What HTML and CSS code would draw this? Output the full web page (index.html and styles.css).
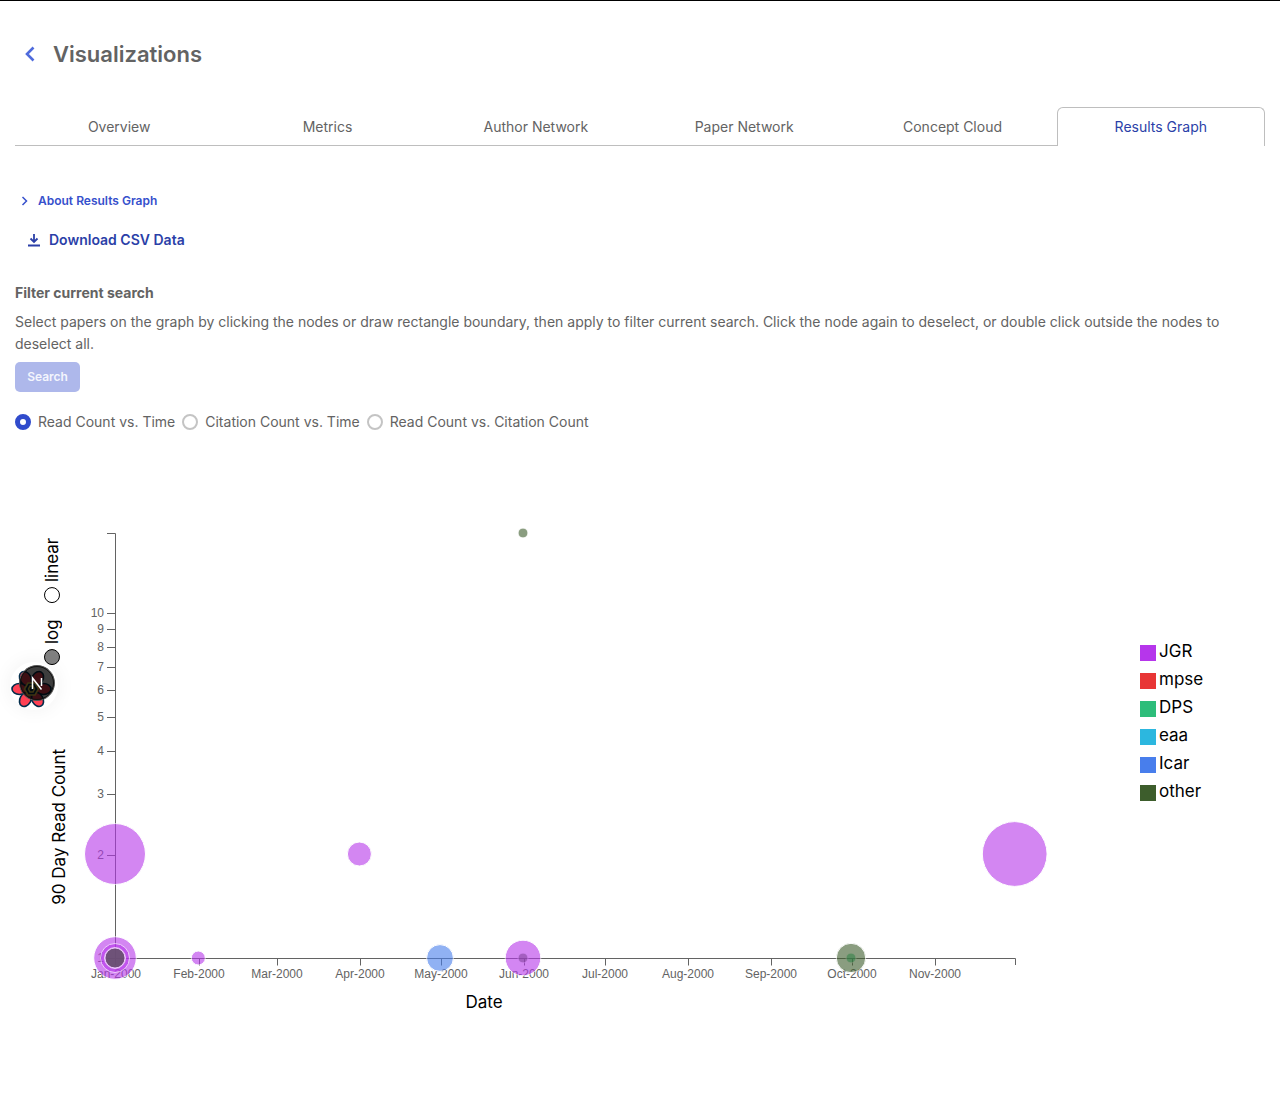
FILE: index.html
```html
<!DOCTYPE html>
<html lang="en">
<head>
<meta charset="utf-8">
<meta name="viewport" content="width=device-width, initial-scale=1">
<title>Visualizations</title>
<link rel="stylesheet" href="styles.css">
</head>
<body>
<main class="page">
  <header class="page-header">
    <a class="back" href="#" aria-label="Back to results">
      <svg width="30" height="30" viewBox="0 0 30 30" aria-hidden="true"><path d="M18.500 8.500 12 15l6.500 6.500" fill="none" stroke="currentColor" stroke-width="2.600"/></svg>
    </a>
    <h1>Visualizations</h1>
  </header>

  <nav class="tabs" aria-label="Visualization types">
    <a class="tab" href="#">Overview</a>
    <a class="tab" href="#">Metrics</a>
    <a class="tab" href="#">Author Network</a>
    <a class="tab" href="#">Paper Network</a>
    <a class="tab" href="#">Concept Cloud</a>
    <a class="tab tab-active" href="#" aria-current="page">Results Graph</a>
  </nav>

  <button class="about" type="button" aria-expanded="false">
    <svg width="20" height="20" viewBox="0 0 20 20" aria-hidden="true"><path d="M7.500 6l4 4-4 4" fill="none" stroke="currentColor" stroke-width="1.500"/></svg>
    About Results Graph
  </button>
  <button class="download" type="button">
    <svg width="14" height="14" viewBox="0 0 14 14" aria-hidden="true"><path d="M7 1v8M3.500 5.500 7 9l3.500-3.500M1 12.500h12" fill="none" stroke="currentColor" stroke-width="1.800"/></svg>
    Download CSV Data
  </button>

  <section class="filter">
    <h2>Filter current search</h2>
    <p>Select papers on the graph by clicking the nodes or draw rectangle boundary, then apply to filter current search. Click the node again to deselect, or double click outside the nodes to deselect all.</p>
    <button class="search" type="button" disabled>Search</button>
  </section>

  <div class="choices" role="radiogroup" aria-label="Graph type">
    <label><input type="radio" name="graph" checked>Read Count vs. Time</label>
    <label><input type="radio" name="graph">Citation Count vs. Time</label>
    <label><input type="radio" name="graph">Read Count vs. Citation Count</label>
  </div>

  <section class="chart" aria-label="Read Count vs. Time">
    <div class="y-side">
      <div class="scale" role="radiogroup" aria-label="Scale">
        <label><input type="radio" name="scale" checked>log</label>
        <label><input type="radio" name="scale">linear</label>
      </div>
      <span class="y-title">90 Day Read Count</span>
    </div>
    <svg class="plot" viewBox="0 0 1065 530" role="img" aria-label="Papers by date and 90 day read count">
      <g transform="translate(40 33)">
        <path class="axis" d="M-8 .5H.5V425.500M-8 80.500H.5M-8 96.500H.5M-8 114.500H.5M-8 134.500H.5M-8 157.500H.5M-8 184.500H.5M-8 218.500H.5M-8 261.500H.5M-8 322.500H.5M-8 425.500H.5"/>
        <path class="axis" d="M.5 432V425.500H900.500V432M84.500 425.500v7M162.500 425.500v7M245.500 425.500v7M326.500 425.500v7M409.500 425.500v7M490.500 425.500v7M573.500 425.500v7M656.500 425.500v7M737.500 425.500v7M820.500 425.500v7"/>
        <g class="y-ticks">
          <text x="-11" y="84">10</text><text x="-11" y="100">9</text><text x="-11" y="118">8</text><text x="-11" y="138">7</text><text x="-11" y="161">6</text><text x="-11" y="188">5</text><text x="-11" y="222">4</text><text x="-11" y="265">3</text><text x="-11" y="326">2</text><text x="-11" y="429">1</text>
        </g>
        <g class="x-ticks">
          <text x="1" y="445">Jan-2000</text><text x="84" y="445">Feb-2000</text><text x="162" y="445">Mar-2000</text><text x="245" y="445">Apr-2000</text><text x="326" y="445">May-2000</text><text x="409" y="445">Jun-2000</text><text x="490" y="445">Jul-2000</text><text x="573" y="445">Aug-2000</text><text x="656" y="445">Sep-2000</text><text x="737" y="445">Oct-2000</text><text x="820" y="445">Nov-2000</text>
        </g>
        <g class="nodes">
          <circle class="jgr" cx="0" cy="321" r="30.500"/>
          <circle class="jgr" cx="0" cy="425" r="21.300"/>
          <circle class="jgr" cx="0" cy="425" r="14.500"/>
          <circle class="jgr" cx="0" cy="425" r="10.500"/>
          <circle class="other" cx="0" cy="425" r="10"/>
          <circle class="jgr" cx="83.300" cy="425" r="7"/>
          <circle class="jgr" cx="244.400" cy="321" r="12"/>
          <circle class="icar" cx="325" cy="425" r="13.400"/>
          <circle class="other" cx="408" cy="425" r="5"/>
          <circle class="jgr" cx="408" cy="425" r="17.800"/>
          <circle class="other" cx="408" cy="0" r="5"/>
          <circle class="dps" cx="736" cy="425" r="5"/>
          <circle class="other" cx="736" cy="425" r="14.700"/>
          <circle class="jgr" cx="899.700" cy="321" r="32.400"/>
        </g>
        <text class="x-title" x="369" y="475">Date</text>
      </g>
    </svg>
    <ul class="legend">
      <li class="jgr">JGR</li>
      <li class="mpse">mpse</li>
      <li class="dps">DPS</li>
      <li class="eaa">eaa</li>
      <li class="icar">Icar</li>
      <li class="other">other</li>
    </ul>
    <button class="devtools" type="button" aria-label="Developer tools">
      <svg width="48" height="48" viewBox="0 0 48 48" aria-hidden="true">
        <g transform="translate(21.500 27)" fill="#ff4154" stroke="#002c4b" stroke-width="1.600">
          <ellipse cx="12" cy="0" rx="7.500" ry="5.500"/>
          <ellipse cx="12" cy="0" rx="7.500" ry="5.500" transform="rotate(60)"/>
          <ellipse cx="12" cy="0" rx="7.500" ry="5.500" transform="rotate(120)"/>
          <ellipse cx="12" cy="0" rx="7.500" ry="5.500" transform="rotate(180)"/>
          <ellipse cx="12" cy="0" rx="7.500" ry="5.500" transform="rotate(240)"/>
          <ellipse cx="12" cy="0" rx="7.500" ry="5.500" transform="rotate(300)"/>
          <path d="M-3.500-6h7L7 0 3.500 6h-7L-7 0z" fill="#002c4b" stroke="#ffd94c"/>
          <path d="M-1.500-3h3L3 0 1.500 3h-3L-3 0z" fill="none" stroke="#ffd94c"/>
        </g>
        <circle cx="27" cy="21" r="17.500" fill="#000" fill-opacity=".76" stroke="#555"/>
        <circle cx="27" cy="21" r="16.500" fill="none" stroke="#111"/>
        <path d="M22.500 27V16l9 11.500M31.500 16v8" fill="none" stroke="#fff" stroke-width="1.500"/>
      </svg>
    </button>
  </section>
</main>
</body>
</html>
```
FILE: styles.css
```css
* { box-sizing: border-box; }

body {
  margin: 0;
  border-top: 1px solid #000;
  background: #fff;
  color: #636363;
  font: 14px/22px Inter, "Liberation Sans", sans-serif;
}

button { font: inherit; border: 0; background: none; padding: 0; cursor: pointer; }
a { text-decoration: none; color: inherit; }

.page { padding: 36px 15px 60px; display: flex; flex-direction: column; }

.page-header { display: flex; align-items: center; gap: 8px; height: 34px; }
.back { display: flex; color: #4f6bdc; }
h1 { margin: 0; font-size: 22px; line-height: 34px; font-weight: 600; }

.tabs { display: grid; grid-template-columns: repeat(6, 1fr); margin-top: 36px; }
.tab {
  height: 39px;
  padding-top: 9px;
  text-align: center;
  border-bottom: 1px solid #bebebe;
}
.tab-active {
  padding-top: 8px;
  color: #2b3fa8;
  border: 1px solid #bebebe;
  border-bottom: 0;
  border-radius: 6px 6px 0 0;
}

.about {
  display: flex;
  align-items: center;
  align-self: flex-start;
  gap: 3px;
  margin-top: 44px;
  color: #3650cc;
  font-size: 12px;
  font-weight: 600;
}
.download {
  display: flex;
  align-items: center;
  align-self: flex-start;
  gap: 8px;
  margin: 17px 0 0 12px;
  color: #2b3fa8;
  font-weight: 600;
}

.filter { margin-top: 31px; }
h2 { margin: 0 0 7px; font-size: 14px; line-height: 22px; font-weight: 700; }
p { margin: 0 0 7px; }
.search {
  display: block;
  width: 65px;
  height: 30px;
  border-radius: 5px;
  background: #aeb8eb;
  color: #f3f5fd;
  font-size: 12px;
  font-weight: 600;
}

.choices { display: flex; flex-wrap: wrap; gap: 7px; margin-top: 19px; }
.choices label { display: flex; align-items: center; gap: 7px; }
input {
  appearance: none;
  flex: none;
  width: 16px;
  height: 16px;
  margin: 0;
  border: 2px solid #c4c4c4;
  border-radius: 50%;
  background: #fff;
}
.choices input:checked { border: 5px solid #304bcc; }

.chart {
  position: relative;
  display: grid;
  grid-template-columns: 60px minmax(0, 1fr) 125px;
  margin-top: 67px;
  color: #000;
  font-size: 17px;
}
.y-side { display: flex; flex-direction: column; padding-top: 38px; gap: 84px; }
.scale, .y-title { writing-mode: vertical-rl; transform: rotate(180deg); line-height: 22px; }
.scale { display: flex; gap: 16px; margin-left: 26px; align-self: flex-start; }
.scale label { display: flex; align-items: center; gap: 5px; }
.scale input { border: 1px solid #000; }
.scale input:checked { background: gray; }
.y-title { margin-left: 33px; align-self: flex-start; }

.plot { display: block; width: 100%; height: auto; overflow: visible; }
.axis { fill: none; stroke: #636363; }
.y-ticks, .x-ticks { fill: #636363; font: 12px "Liberation Sans", sans-serif; }
.y-ticks { text-anchor: end; }
.x-ticks, .x-title { text-anchor: middle; }
.nodes circle { fill: var(--series); opacity: .6; stroke: #fff; }

.jgr { --series: #b636eb; }
.mpse { --series: #e83535; }
.dps { --series: #2dbd7a; }
.eaa { --series: #2cb7df; }
.icar { --series: #487eec; }
.other { --series: #3d5d2c; }

.legend {
  list-style: none;
  margin: 140px 0 0;
  padding: 0;
  display: flex;
  flex-direction: column;
  gap: 6px;
}
.legend li { display: flex; align-items: center; gap: 3px; line-height: 22px; }
.legend li::before { content: ""; width: 16px; height: 16px; margin-top: 4px; background: var(--series); }

.devtools { position: absolute; left: -5px; top: 162px; width: 48px; height: 48px; border-radius: 50%; box-shadow: 0 0 20px rgba(0, 0, 0, .06); }
.devtools svg { display: block; }
```
